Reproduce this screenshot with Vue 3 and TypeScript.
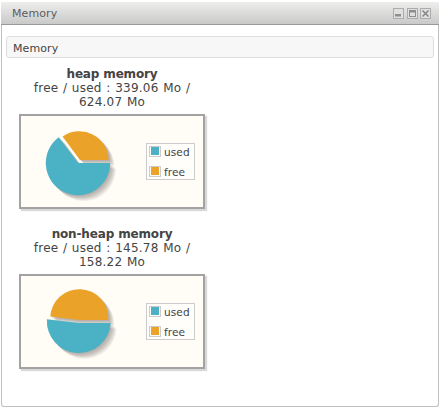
<script setup lang="ts">
interface MemoryChart {
  id: string
  title: string
  line1: string
  line2: string
  used: string
  free: string
}

const charts: MemoryChart[] = [
  {
    id: 'heap',
    title: 'heap memory',
    line1: 'free / used : 339.06 Mo /',
    line2: '624.07 Mo',
    used: 'M58.2 48 H90.2 A32.2 32.2 0 1 1 38.8 22.2 Z',
    free: 'M60 45 L42.6 21.6 A29.2 29.2 0 0 1 88.6 45 Z',
  },
  {
    id: 'nonheap',
    title: 'non-heap memory',
    line1: 'free / used : 145.78 Mo /',
    line2: '158.22 Mo',
    used: 'M59 48 H90.8 A32 32 0 1 1 26.9 44.2 Z',
    free: 'M59.4 45 L30.3 41.5 A29.1 29.1 0 0 1 88.4 45 Z',
  },
]
</script>

<template>
  <div class="window">
    <header class="titlebar">
      <span class="caption">Memory</span>
      <div class="tools">
        <svg class="tool" viewBox="0 0 11 11"><rect class="edge" x=".5" y=".5" width="10" height="10" /><path class="ink" d="M2 6h6v2.5H2z" /></svg>
        <svg class="tool" viewBox="0 0 11 11"><rect class="edge" x=".5" y=".5" width="10" height="10" /><path class="ink" fill-rule="evenodd" d="M2 2h7v7H2zM3 4.5v3.5h5V4.5z" /></svg>
        <svg class="tool last" viewBox="0 0 11 11"><rect class="edge" x=".5" y=".5" width="10" height="10" /><path class="cross" d="M2.5 2.5l6 6M8.5 2.5l-6 6" /></svg>
      </div>
    </header>
    <main class="content">
      <h2 class="section">Memory</h2>
      <section v-for="chart in charts" :key="chart.id" class="chart">
        <div class="title">{{ chart.title }}</div>
        <div class="detail">{{ chart.line1 }}</div>
        <div class="detail second">{{ chart.line2 }}</div>
        <div class="plot">
          <svg class="pie" width="110" height="91" viewBox="0 0 110 91">
            <g class="shade">
              <g v-for="n in 6" :key="n" :transform="`translate(${n * 0.95} ${n * 0.95})`">
                <path :d="chart.used" /><path :d="chart.free" />
              </g>
            </g>
            <path class="used" :d="chart.used" />
            <path class="free" :d="chart.free" />
          </svg>
          <div class="legend">
            <div class="entry"><i class="swatch teal"></i><span>used</span></div>
            <div class="entry"><i class="swatch amber"></i><span>free</span></div>
          </div>
        </div>
      </section>
    </main>
  </div>
</template>

<style>
body { background: #fff; }
</style>

<style scoped>
.window {
  box-sizing: border-box;
  width: 438px;
  height: 405px;
  margin: 2px 0 0 1px;
  border: 1px solid #bfbfbf;
  border-top: 0;
  border-radius: 3px;
  font-family: Verdana, "DejaVu Sans", sans-serif;
  color: #444;
  display: flow-root;
}
.titlebar {
  box-sizing: border-box;
  height: 23px;
  margin: 0 -1px;
  padding: 0 8px 0 11px;
  border-bottom: 1px solid #999;
  border-radius: 3px 3px 0 0;
  background: linear-gradient(#eeeeec, #c9c9c9);
  display: flex;
  align-items: center;
  justify-content: space-between;
}
.caption { font-size: 11px; line-height: 22px; letter-spacing: 0.1px; color: #5b5b5b; padding-top: 2px; }
.tools { display: flex; gap: 3px; padding-top: 1px; }
.tool { width: 11px; height: 11px; display: block; }
.last { margin-left: -1px; }
.edge { fill: #e0e0e0; stroke: #acacac; }
.ink { fill: #8e8e8e; }
.cross { stroke: #858585; stroke-width: 1.5; fill: none; }
.content { padding: 11px 4px 0; }
.section {
  box-sizing: border-box;
  height: 22px;
  margin: 0 0 9px;
  padding: 0 6px;
  border: 1px solid #dedede;
  border-radius: 3px;
  background: #f7f7f7;
  font-size: 11px;
  letter-spacing: 0.1px;
  font-weight: normal;
  line-height: 23px;
}
.chart { width: 186px; margin: 0 0 18px 13px; }
.title, .detail { height: 14px; font-size: 12px; line-height: 14px; text-align: center; white-space: nowrap; }
.title { font-weight: bold; letter-spacing: -0.15px; }
.detail { letter-spacing: 0.25px; word-spacing: 0.5px; }
.second { margin-bottom: 5px; }
.plot {
  box-sizing: border-box;
  width: 186px;
  height: 95px;
  border: 2px solid #a2a2a2;
  background: #fffdf6;
  box-shadow: 2px 2px 1px #d8d8d8;
  display: flex;
}
.pie { flex: none; margin: -1px 0 0 -1px; }
.shade { fill: #6b6560; fill-opacity: 0.1; }
.used { fill: #4bb2c5; }
.free { fill: #eaa228; }
.legend {
  box-sizing: border-box;
  width: 49px;
  height: 37px;
  margin: 27px 0 0 16px;
  padding: 2px 0 0 2px;
  border: 1px solid #ccc;
  background: #fffefb;
  font-size: 10.6px;
  line-height: 13px;
}
.entry { display: flex; gap: 3px; height: 11px; margin-bottom: 8px; }
.entry span { letter-spacing: 0.05px; }
.swatch { box-sizing: border-box; flex: none; width: 12px; height: 11px; border: 1px solid #ccc; padding: 0 1px 1px; background-clip: content-box; }
.entry + .entry { margin-top: 9px; }
.teal { background-color: #4bb2c5; }
.amber { background-color: #eaa228; }
</style>
